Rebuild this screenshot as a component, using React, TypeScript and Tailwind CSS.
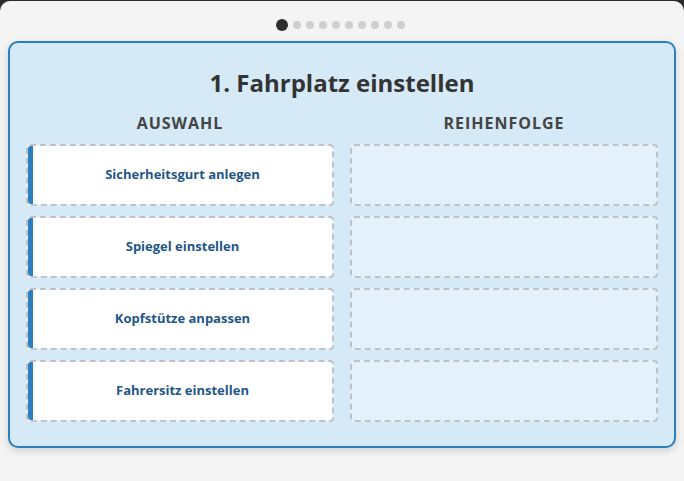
const auswahl = [
  'Sicherheitsgurt anlegen',
  'Spiegel einstellen',
  'Kopfstütze anpassen',
  'Fahrersitz einstellen',
];

function Dots({ count, active }: { count: number; active: number }) {
  return (
    <div className="flex items-center justify-center gap-[5px]">
      {Array.from({ length: count }).map((_, i) =>
        i === active ? (
          <span key={i} className="w-3 h-3 rounded-full bg-[#2e2e2e]" />
        ) : (
          <span key={i} className="w-2 h-2 rounded-full bg-[#cfcfcf]" />
        )
      )}
    </div>
  );
}

export default function App() {
  return (
    <div className="h-[481px] w-[684px] bg-[#2b2b2b] pt-px font-['Open_Sans','Noto_Sans',sans-serif]">
      <div className="h-full rounded-t-[10px] bg-[#f4f4f4] px-2 pt-[18px]">
        <div className="-translate-x-[2px]">
          <Dots count={10} active={0} />
        </div>

        {/* Task card */}
        <div className="mt-[10px] rounded-[10px] border-2 border-[#2a7fbf] bg-[#d6e9f7] px-4 pt-6 pb-6 shadow-[0_3px_8px_rgba(0,0,0,0.15)]">
          <h1 className="text-center text-[24px] leading-8 font-bold text-[#333333]">
            1. Fahrplatz einstellen
          </h1>

          <div className="mt-[14px] grid grid-cols-2 gap-4">
            <div>
              <h2 className="text-center text-[16px] leading-5 font-bold tracking-[1px] text-[#444444]">
                AUSWAHL
              </h2>
              <div className="mt-[11px] flex flex-col gap-[10px]">
                {auswahl.map((label) => (
                  <div
                    key={label}
                    className="h-[62px] rounded-[4px] border-2 border-dashed border-[#bfc3c7] bg-[#e4f0fa]"
                  >
                    <div className="flex h-full items-center justify-center rounded-[3px] border-l-[5px] border-[#2a7fbf] bg-white">
                      <span className="text-[13px] font-bold text-[#1f5688]">{label}</span>
                    </div>
                  </div>
                ))}
              </div>
            </div>

            <div>
              <h2 className="text-center text-[16px] leading-5 font-bold tracking-[1px] text-[#444444]">
                REIHENFOLGE
              </h2>
              <div className="mt-[11px] flex flex-col gap-[10px]">
                {auswahl.map((label) => (
                  <div
                    key={label}
                    className="h-[62px] rounded-[4px] border-2 border-dashed border-[#bfc3c7] bg-[#e4f0fa]"
                  />
                ))}
              </div>
            </div>
          </div>
        </div>
      </div>
    </div>
  );
}
